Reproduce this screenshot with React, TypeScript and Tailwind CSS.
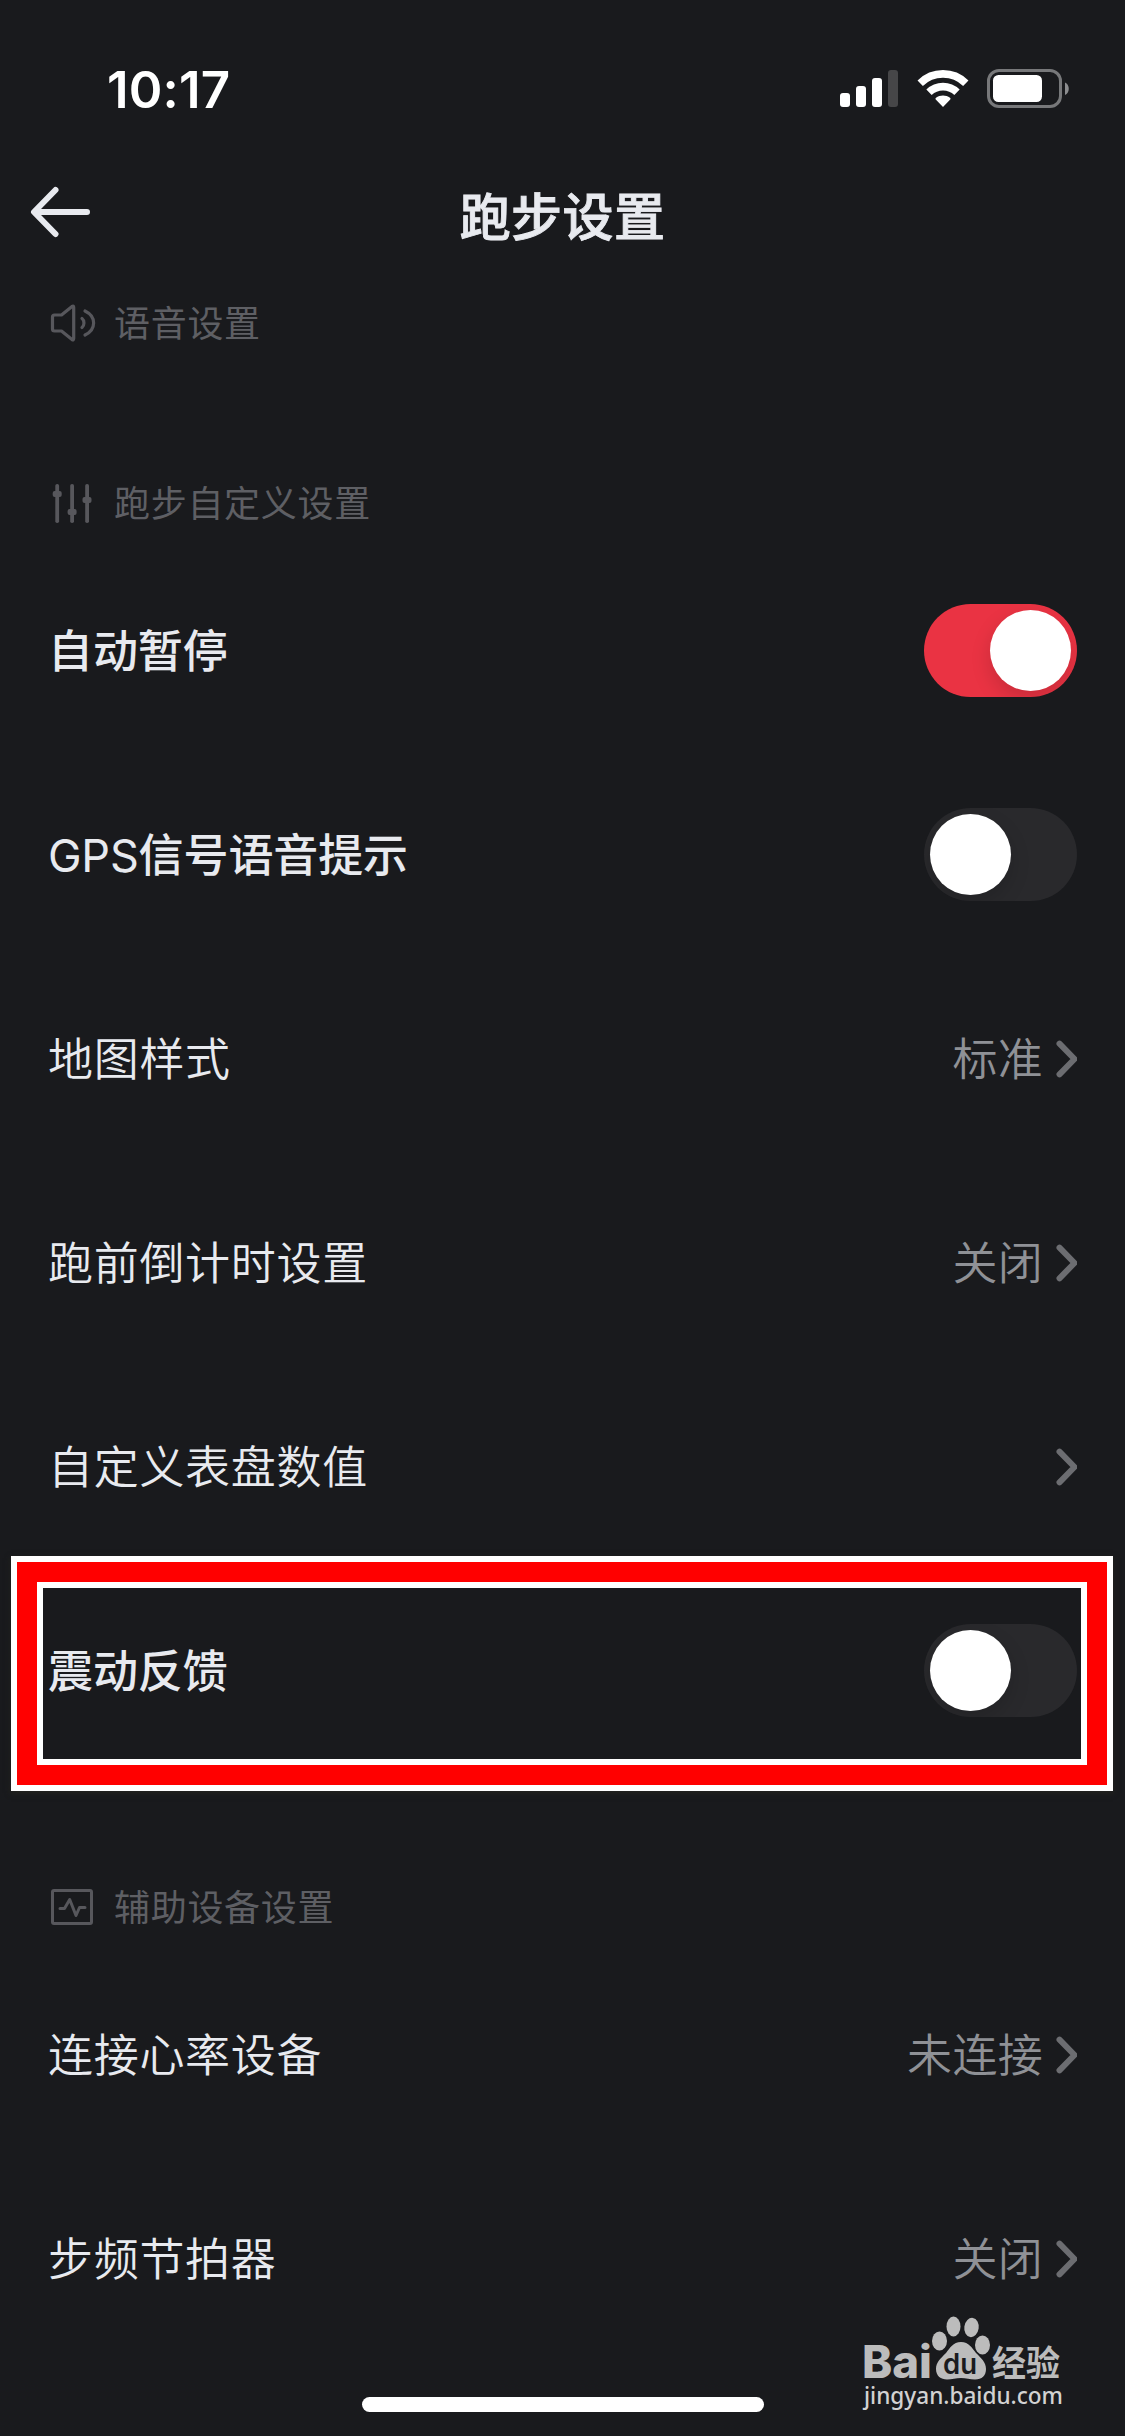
import type { ReactNode } from "react";

function StatusBar() {
  return (
    <div className="h-[147px] pl-[107px] pr-[55px] pt-[31px] flex items-center justify-between">
      <p className="text-white text-[51px] leading-none font-semibold tracking-[0.2px]">
        10:17
      </p>
      <div className="flex items-center">
        <svg width="58" height="38" viewBox="0 0 58 38" fill="#fff">
          <rect x="0" y="23" width="10" height="14" rx="3" />
          <rect x="16" y="16" width="10" height="21" rx="3" />
          <rect x="32" y="8" width="10" height="29" rx="3" />
          <rect x="48" y="0" width="10" height="37" rx="3" fill="#464648" />
        </svg>
        <svg
          className="ml-[19px]"
          width="52"
          height="38"
          viewBox="0 0 52 38"
          fill="none"
          stroke="#fff"
          strokeWidth="7.6"
        >
          <path d="M3.2 13.2a32.5 32.5 0 0 1 45.6 0" />
          <path d="M12 22.3a20 20 0 0 1 28 0" />
          <path
            d="M26 37l-7-7.2c-.7-.7-.7-1.4 0-2 4-3.2 10-3.2 14 0 .7.6.7 1.3 0 2z"
            fill="#fff"
            stroke="none"
          />
        </svg>
        <svg
          className="ml-[18px]"
          width="83"
          height="40"
          viewBox="0 0 83 40"
          fill="none"
        >
          <rect x="1.5" y="1.5" width="72" height="36" rx="10.5" stroke="#77787a" strokeWidth="3" />
          <rect x="6" y="6" width="49" height="27" rx="5.5" fill="#fff" />
          <path d="M78 13.5c5 2 5 10.5 0 12.5z" fill="#8c8d8f" />
        </svg>
      </div>
    </div>
  );
}

function NavBar() {
  return (
    <div className="h-[130px] px-[30px] grid grid-cols-[62px_1fr_62px] items-center">
      <svg
        width="62"
        height="52"
        viewBox="0 0 62 52"
        fill="none"
        stroke="#e8eaef"
        strokeWidth="6"
        strokeLinecap="round"
        strokeLinejoin="round"
      >
        <path d="M25.5 4L4 26l21.500 22M5 26h52" />
      </svg>
      <h1 className="text-[#e8eaef] text-[51px] leading-none font-medium text-center pt-2.5 tracking-[0.4px] [-webkit-text-stroke:0.9px_#e8eaef]">
        跑步设置
      </h1>
    </div>
  );
}

function SectionTitle({ icon, text }: { icon: ReactNode; text: string }) {
  return (
    <div className="h-[92px] pl-[50px] flex items-center text-[#5e5f64]">
      {icon}
      <h2 className="ml-[18px] pt-px text-[36px] leading-none tracking-[0.7px]">{text}</h2>
    </div>
  );
}

function SpeakerIcon() {
  return (
    <svg
      width="46"
      height="40"
      viewBox="0 0 46 40"
      fill="none"
      stroke="#57575c"
      strokeWidth="3.2"
      strokeLinecap="round"
      strokeLinejoin="round"
    >
      <path d="M4.500 12h7L22 3.500q1.700-1 1.700 1v31q0 2-1.700 1L11.500 28h-7q-2 0-2-2V14q0-2 2-2z" />
      <path d="M32 15.500c2.600 2 2.600 7 0 9M35 8c11.500 5.500 11.500 18.500 0 24" />
    </svg>
  );
}

function SlidersIcon() {
  return (
    <svg width="46" height="40" viewBox="0 0 46 40" fill="#57575c">
      <rect x="5.300" y="1" width="3.800" height="39" rx="1.800" />
      <rect x="20.200" y="1" width="3.800" height="39" rx="1.800" />
      <rect x="35.200" y="1" width="3.800" height="39" rx="1.800" />
      <rect x="2.700" y="8" width="9" height="6" rx="2" />
      <rect x="17.600" y="26" width="9" height="6" rx="2" />
      <rect x="32.500" y="14" width="9" height="6" rx="2" />
    </svg>
  );
}

function PulseIcon() {
  return (
    <svg
      width="46"
      height="40"
      viewBox="0 0 46 40"
      fill="none"
      stroke="#57575c"
      strokeWidth="3"
      strokeLinecap="round"
      strokeLinejoin="round"
    >
      <rect x="2.500" y="3.500" width="39" height="33" rx="1.500" />
      <path d="M10 21.500h4.500l5.200-9 6.300 16 3.500-8H35" />
    </svg>
  );
}

function Chevron() {
  return (
    <svg
      className="ml-2.5"
      width="24"
      height="38"
      viewBox="0 0 24 38"
      fill="none"
      stroke="#6c6d71"
      strokeWidth="6"
      strokeLinecap="round"
      strokeLinejoin="round"
    >
      <path d="M6.500 3.700L21.500 19 6.500 34.300" />
    </svg>
  );
}

function Toggle({ on }: { on?: boolean }) {
  return (
    <div
      className={
        on
          ? "w-[153px] h-[93px] mb-px rounded-full p-1.5 overflow-hidden flex justify-end bg-[#ea3343]"
          : "w-[153px] h-[93px] mb-px rounded-full p-1.5 overflow-hidden flex bg-[#29292c]"
      }
    >
      <div className="size-[81px] rounded-full bg-white shadow-[0_8px_20px_rgba(0,0,0,0.15)]"></div>
    </div>
  );
}

function Row({
  label,
  bold,
  children,
}: {
  label: string;
  bold?: boolean;
  children: ReactNode;
}) {
  return (
    <div className="h-[204px] pl-12 pr-12 flex items-center justify-between">
      <p
        className={
          bold
            ? "text-[#e8eaef] text-[45px] leading-none tracking-[-0.1px] font-medium"
            : "text-[#e8eaef] text-[45px] leading-none tracking-[0.7px] font-[350]"
        }
      >
        {label.startsWith("GPS") ? (
          <>
            <span className="font-normal tracking-[-0.2px]">GPS</span>
            {label.slice(3)}
          </>
        ) : (
          label
        )}
      </p>
      <div className="flex items-center text-[#8f9196] text-[45px] leading-none tracking-[0.3px] font-[350]">
        {children}
      </div>
    </div>
  );
}

function Watermark() {
  return (
    <div className="absolute left-[860px] top-[2312px]">
      <svg
        width="206"
        height="100"
        viewBox="0 0 206 100"
        fill="#bcbcbc"
        fontFamily="'Noto Sans CJK SC', sans-serif"
      >
        <text x="2" y="66" fontFamily="Inter, sans-serif" fontSize="45" fontWeight="800" textLength="70" lengthAdjust="spacingAndGlyphs">
          Bai
        </text>
        <ellipse cx="79.500" cy="29" rx="7.500" ry="9.500" />
        <ellipse cx="93.500" cy="14.500" rx="7" ry="10" />
        <ellipse cx="111.500" cy="15.500" rx="7.200" ry="9.700" transform="rotate(8 111.5 15.5)" />
        <ellipse cx="122.500" cy="33" rx="7.500" ry="9.500" />
        <path d="M101 30c-8 0-11 6-15 11-5 5-10 9-10 16 0 7 5 10.500 11 10.500 5 0 9-1.500 14-1.500s9 1.500 14 1.500c7 0 11-4 11-10.500 0-7-5-11-10-16-4-5-7-11-15-11z" />
        <text x="83" y="62" fontFamily="Inter, sans-serif" fontSize="28" fontWeight="600" fill="#1a1b1e" textLength="34" lengthAdjust="spacingAndGlyphs">
          du
        </text>
        <text x="132" y="64" fontSize="35" fontWeight="700" textLength="68" lengthAdjust="spacingAndGlyphs">
          经验
        </text>
        <text x="4" y="92" fontFamily="'Noto Sans', sans-serif" fontSize="23" fontWeight="500" fill="#d2d2d2" textLength="199" lengthAdjust="spacingAndGlyphs">
          jingyan.baidu.com
        </text>
      </svg>
    </div>
  );
}

export default function App() {
  return (
    <div className="relative w-[1125px] h-[2436px] overflow-hidden bg-[#191a1d] font-[Inter,'Noto_Sans_CJK_SC',sans-serif]">
      <StatusBar />
      <NavBar />

      <div className="flex flex-col gap-[88px]">
        <SectionTitle icon={<SpeakerIcon />} text="语音设置" />

        <div>
          <SectionTitle icon={<SlidersIcon />} text="跑步自定义设置" />
          <Row label="自动暂停" bold>
            <Toggle on />
          </Row>
          <Row label="GPS信号语音提示" bold>
            <Toggle />
          </Row>
          <Row label="地图样式">
            标准
            <Chevron />
          </Row>
          <Row label="跑前倒计时设置">
            关闭
            <Chevron />
          </Row>
          <Row label="自定义表盘数值">
            <Chevron />
          </Row>
          <Row label="震动反馈" bold>
            <Toggle />
          </Row>
        </div>

        <div>
          <SectionTitle icon={<PulseIcon />} text="辅助设备设置" />
          <Row label="连接心率设备">
            未连接
            <Chevron />
          </Row>
          <Row label="步频节拍器">
            关闭
            <Chevron />
          </Row>
        </div>
      </div>

      {/* highlight frame around the vibration row */}
      <div className="absolute left-[11px] top-[1556px] w-[1102px] h-[235px] border-6 border-white shadow-[0_2px_6px_#24241f]">
        <div className="size-full border-20 border-[#ff0000]">
          <div className="size-full border-6 border-white"></div>
        </div>
      </div>

      <Watermark />
      <div className="absolute left-[362px] top-[2397px] w-[402px] h-[15px] rounded-full bg-white"></div>
    </div>
  );
}
